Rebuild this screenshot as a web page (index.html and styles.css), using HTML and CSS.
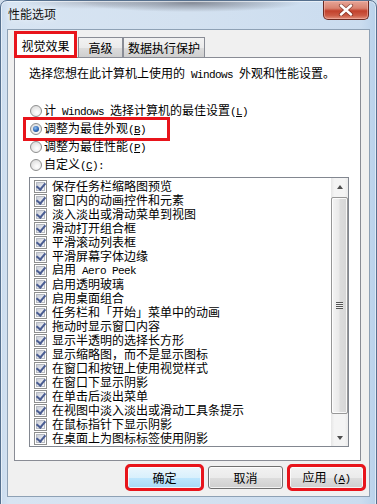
FILE: index.html
```html
<!DOCTYPE html>
<html lang="zh-CN">
<head>
<meta charset="utf-8">
<title>性能选项</title>
<link rel="stylesheet" href="styles.css">
</head>
<body>
<div class="window">
  <div class="titlebar">
    <span class="title">性能选项</span>
    <div class="close" aria-label="关闭">
      <svg width="16" height="12" viewBox="0 0 16 12">
        <path d="M3 1.5 L13 10.5 M13 1.5 L3 10.5" stroke="#5a2018" stroke-width="4.2" stroke-linecap="round" opacity="0.55"/>
        <path d="M3 1.5 L13 10.5 M13 1.5 L3 10.5" stroke="#ffffff" stroke-width="2.4" stroke-linecap="round"/>
      </svg>
    </div>
  </div>
  <div class="client">
    <div class="tabs">
      <div class="tab active marked">视觉效果</div>
      <div class="tab tab-adv">高级</div>
      <div class="tab tab-dep">数据执行保护</div>
    </div>
    <div class="panel">
      <p class="desc">选择您想在此计算机上使用的<span class="lat"> Windows </span>外观和性能设置。</p>
      <div class="radios">
        <div class="radio"><span class="rb"></span><span class="txt">计<span class="lat"> Windows </span>选择计算机的最佳设置<span class="lat">(<u>L</u>)</span></span></div>
        <div class="radio marked"><span class="rb on"></span><span class="txt">调整为最佳外观<span class="lat">(<u>B</u>)</span></span></div>
        <div class="radio"><span class="rb"></span><span class="txt">调整为最佳性能<span class="lat">(<u>P</u>)</span></span></div>
        <div class="radio"><span class="rb"></span><span class="txt">自定义<span class="lat">(<u>C</u>):</span></span></div>
      </div>
      <div class="listbox">
        <ul class="items">
          <li><span class="cb"></span><span class="txt">保存任务栏缩略图预览</span></li>
          <li><span class="cb"></span><span class="txt">窗口内的动画控件和元素</span></li>
          <li><span class="cb"></span><span class="txt">淡入淡出或滑动菜单到视图</span></li>
          <li><span class="cb"></span><span class="txt">滑动打开组合框</span></li>
          <li><span class="cb"></span><span class="txt">平滑滚动列表框</span></li>
          <li><span class="cb"></span><span class="txt">平滑屏幕字体边缘</span></li>
          <li><span class="cb"></span><span class="txt">启用<span class="lat"> Aero Peek</span></span></li>
          <li><span class="cb"></span><span class="txt">启用透明玻璃</span></li>
          <li><span class="cb"></span><span class="txt">启用桌面组合</span></li>
          <li><span class="cb"></span><span class="txt">任务栏和「开始」菜单中的动画</span></li>
          <li><span class="cb"></span><span class="txt">拖动时显示窗口内容</span></li>
          <li><span class="cb"></span><span class="txt">显示半透明的选择长方形</span></li>
          <li><span class="cb"></span><span class="txt">显示缩略图，而不是显示图标</span></li>
          <li><span class="cb"></span><span class="txt">在窗口和按钮上使用视觉样式</span></li>
          <li><span class="cb"></span><span class="txt">在窗口下显示阴影</span></li>
          <li><span class="cb"></span><span class="txt">在单击后淡出菜单</span></li>
          <li><span class="cb"></span><span class="txt">在视图中淡入淡出或滑动工具条提示</span></li>
          <li><span class="cb"></span><span class="txt">在鼠标指针下显示阴影</span></li>
          <li><span class="cb"></span><span class="txt">在桌面上为图标标签使用阴影</span></li>
        </ul>
        <div class="scrollbar">
          <div class="sb-btn"><span class="arrow up"></span></div>
          <div class="track">
            <div class="thumb"><span class="grip"></span></div>
          </div>
          <div class="sb-btn"><span class="arrow down"></span></div>
        </div>
      </div>
    </div>
    <div class="buttons">
      <div class="btn default marked">确定</div>
      <div class="btn">取消</div>
      <div class="btn marked"><span class="txt">应用<span class="lat"> (<u>A</u>)</span></span></div>
    </div>
  </div>
</div>
</body>
</html>
```

FILE: styles.css
```css
html, body {
  margin: 0;
  padding: 0;
  width: 377px;
  height: 504px;
  overflow: hidden;
  background: #cfdcea;
}

body {
  font-family: "Noto Sans CJK SC", "Noto Sans", sans-serif;
  font-size: 12px;
  color: #000;
}

.window {
  box-sizing: border-box;
  width: 377px;
  height: 506px;
  border: 1px solid #56708e;
  border-radius: 7px 7px 0 0;
  background:
    radial-gradient(ellipse 110px 9px at 190px 2px, rgba(70, 70, 80, 0.55), rgba(70, 70, 80, 0) 100%),
    radial-gradient(ellipse 70px 7px at 90px 1px, rgba(120, 120, 130, 0.35), rgba(120, 120, 130, 0) 100%),
    linear-gradient(to right, #c9dbee 0, #d7e4f2 8px, #d3e1f0 50%, #cadcef 96%, #b9d1ea 100%);
  box-shadow: inset 0 0 0 1px rgba(255, 255, 255, 0.55);
  display: flex;
  flex-direction: column;
}

.titlebar {
  height: 28px;
  display: flex;
  align-items: flex-start;
  justify-content: space-between;
  padding: 0 7px 0 7px;
  flex: none;
}

.title {
  line-height: 14px;
  margin-top: 6px;
  color: #111;
  text-shadow: 0 0 6px rgba(255, 255, 255, 0.9);
}

.close {
  box-sizing: border-box;
  width: 46px;
  height: 19px;
  border: 1px solid #6b2a22;
  border-top: none;
  border-radius: 0 0 5px 5px;
  background: linear-gradient(to bottom, #e6a597 0%, #d98370 40%, #c2412c 55%, #cc5a44 80%, #e0907c 100%);
  box-shadow: inset 0 0 0 1px rgba(255, 200, 190, 0.45);
  display: flex;
  align-items: center;
  justify-content: center;
}

.client {
  box-sizing: border-box;
  margin: 0 6px;
  height: 468px;
  border: 1px solid #8ea1b5;
  background: #f0f0f0;
  flex: none;
}

.tabs {
  height: 27px;
  padding-left: 6px;
  display: flex;
  align-items: flex-end;
}

.tab {
  box-sizing: border-box;
  height: 20px;
  border: 1px solid #898c95;
  border-bottom: none;
  background: linear-gradient(to bottom, #f2f2f2 0%, #ebebeb 50%, #dddddd 51%, #cfcfcf 100%);
  line-height: 14px;
  padding-top: 3px;
  text-align: center;
  white-space: nowrap;
}

.tab.active {
  position: relative;
  z-index: 1;
  width: 63px;
  height: 27px;
  margin-bottom: -1px;
  padding-top: 7px;
  background: #fff;
}

.tab-adv {
  width: 45px;
  margin-left: 1px;
}

.tab-dep {
  width: 82px;
}

.marked {
  outline: 3px solid #e8141b;
}

.tab.marked {
  outline-offset: -3px;
}

.panel {
  box-sizing: border-box;
  margin-left: 6px;
  width: 347px;
  height: 404px;
  border: 1px solid #898c95;
  background: #fff;
  padding: 8px 0 0 11px;
}

.desc {
  margin: 0 0 0 3px;
  line-height: 14px;
  height: 14px;
  white-space: pre;
}

.txt {
  white-space: pre;
  line-height: 14px;
}

.lat {
  font-family: "Liberation Mono", monospace;
  font-size: 11px;
  letter-spacing: -0.6px;
}

.radios {
  margin-top: 22px;
  display: flex;
  flex-direction: column;
  align-items: flex-start;
}

.radio {
  box-sizing: border-box;
  height: 18px;
  padding-left: 4px;
  display: flex;
  align-items: center;
  white-space: nowrap;
}

.radio.marked {
  width: 141px;
}

.rb {
  box-sizing: border-box;
  width: 12px;
  height: 12px;
  margin-right: 2px;
  border-radius: 50%;
  border: 1px solid #8e8f8f;
  background: radial-gradient(circle at 60% 65%, #ffffff 0, #f1f1f1 35%, #d2d2d2 100%);
  display: flex;
  align-items: center;
  justify-content: center;
  flex: none;
}

.rb.on::after {
  content: "";
  width: 6px;
  height: 6px;
  border-radius: 50%;
  background: radial-gradient(circle at 40% 35%, #8fc0ef 0, #2f66b5 55%, #163c7a 100%);
}

.listbox {
  box-sizing: border-box;
  margin: 3px 0 0 3px;
  width: 320px;
  height: 270px;
  border: 1px solid #828790;
  display: flex;
}

.items {
  flex: 1;
  list-style: none;
  margin: 0;
  padding: 1px 0 0 4px;
}

.items li {
  height: 14px;
  line-height: 14px;
  display: flex;
  align-items: center;
  gap: 5px;
  white-space: nowrap;
}

.cb {
  position: relative;
  box-sizing: border-box;
  width: 13px;
  height: 13px;
  border: 1px solid #8e8f8f;
  background: #fff;
  flex: none;
}

.cb::before {
  content: "";
  position: absolute;
  left: 1px;
  top: 1px;
  right: 1px;
  bottom: 1px;
  background: linear-gradient(135deg, #c9cdd6 0%, #e2e4ea 50%, #f7f7f9 100%);
  border: 1px solid #b6bac2;
  box-sizing: border-box;
}

.cb::after {
  content: "";
  position: absolute;
  left: 3px;
  top: 0px;
  width: 4px;
  height: 7px;
  border-right: 2px solid #4a5d92;
  border-bottom: 2px solid #4a5d92;
  transform: rotate(40deg);
}

.scrollbar {
  width: 17px;
  display: flex;
  flex-direction: column;
  background: linear-gradient(to right, #e6e6e6 0, #f4f4f4 20%, #f4f4f4 80%, #eaeaea 100%);
}

.sb-btn {
  height: 17px;
  display: flex;
  align-items: center;
  justify-content: center;
  flex: none;
}

.arrow {
  width: 0;
  height: 0;
  border-left: 3.5px solid transparent;
  border-right: 3.5px solid transparent;
}

.arrow.up {
  border-bottom: 4px solid #4e4e4e;
}

.arrow.down {
  border-top: 4px solid #4e4e4e;
}

.track {
  flex: 1;
}

.thumb {
  box-sizing: border-box;
  margin-top: 2px;
  height: 217px;
  border: 1px solid #979797;
  border-radius: 2px;
  background: linear-gradient(to right, #f4f4f4 0, #eaeaea 45%, #dcdcdc 55%, #d6d6d6 100%);
  box-shadow: inset 0 0 0 1px rgba(255, 255, 255, 0.8);
  display: flex;
  align-items: center;
  justify-content: center;
}

.grip {
  width: 7px;
  height: 7px;
  background: repeating-linear-gradient(to bottom, #555 0 1px, #f2f2f2 1px 2px);
}

.buttons {
  margin-top: 5px;
  padding-right: 5px;
  display: flex;
  justify-content: flex-end;
  gap: 6px;
}

.btn {
  box-sizing: border-box;
  width: 75px;
  height: 23px;
  border: 1px solid #707070;
  border-radius: 3px;
  background: linear-gradient(to bottom, #f2f2f2 0%, #ebebeb 50%, #dddddd 51%, #cfcfcf 100%);
  box-shadow: inset 0 0 0 1px rgba(255, 255, 255, 0.75);
  display: flex;
  align-items: center;
  justify-content: center;
  line-height: 14px;
  white-space: nowrap;
}

.btn.default {
  border-color: #3c7fb1;
  background: linear-gradient(to bottom, #eaf6fd 0%, #d9f0fc 50%, #bee6fd 51%, #a7d9f5 100%);
}

.btn.marked {
  outline-offset: -1px;
}
```
